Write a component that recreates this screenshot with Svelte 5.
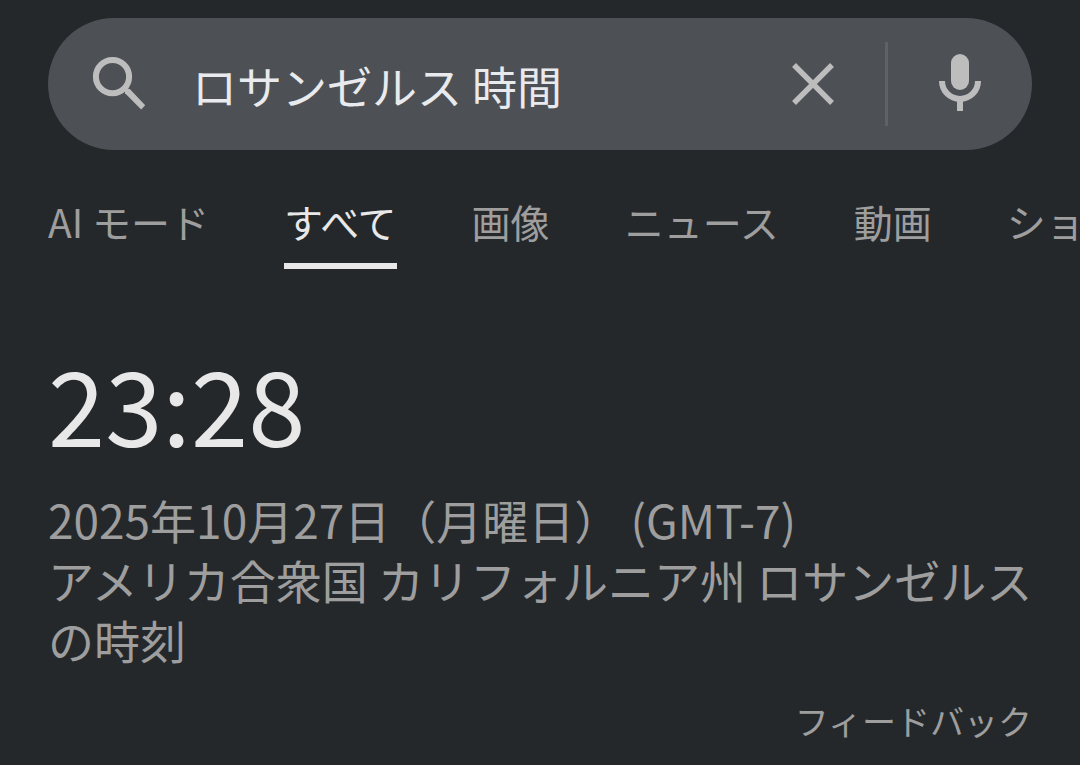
<script>
  let query = $state('ロサンゼルス 時間');
  let active = $state('すべて');

  const tabs = ['AI モード', 'すべて', '画像', 'ニュース', '動画', 'ショッピング'];
</script>

<div class="page">
  <form class="search" role="search" onsubmit={(e) => e.preventDefault()}>
    <button class="icon" aria-label="検索">
      <svg width="54" height="54" viewBox="0 0 54 54" fill="none" stroke="currentColor">
        <circle cx="20.5" cy="19.7" r="16.6" stroke-width="6" />
        <path d="M33 33.2 34.200 31.500 37.800 32 53.200 48.300 49.200 52.400 33 36.200Z" fill="currentColor" stroke="none" />
      </svg>
    </button>
    <input type="text" bind:value={query} aria-label="検索キーワード" />
    <button type="button" class="icon" aria-label="クリア" onclick={() => (query = '')}>
      <svg width="44" height="44" viewBox="0 0 44 44" fill="none" stroke="currentColor" stroke-width="5.4">
        <path d="M3 3 41 41M41 3 3 41" />
      </svg>
    </button>
    <span class="divider"></span>
    <button type="button" class="icon" aria-label="音声検索">
      <svg width="44" height="60" viewBox="0 0 44 60">
        <rect x="13" y="0" width="18" height="36" rx="9" fill="currentColor" />
        <path d="M4 27a18 18 0 0 0 36 0M22 45v12" fill="none" stroke="currentColor" stroke-width="6" />
      </svg>
    </button>
  </form>

  <nav class="tabs">
    {#each tabs as tab}
      <a href="#{tab}" class:active={tab === active} onclick={() => (active = tab)}>{tab}</a>
    {/each}
  </nav>

  <main class="result">
    <div class="time">23:28</div>
    <div class="details">
      <div>2025年10月27日（月曜日） (GMT-7)</div>
      <div>アメリカ合衆国 カリフォルニア州 ロサンゼルスの時刻</div>
    </div>
    <a class="feedback" href="#feedback">フィードバック</a>
  </main>
</div>

<style>
  :global(body) {
    background: #25282b;
  }

  .page {
    padding: 18px 48px 0;
    font-family: "Noto Sans CJK JP", sans-serif;
    color: #9e9e9e;
    overflow: hidden;
  }

  .search {
    display: flex;
    align-items: center;
    box-sizing: border-box;
    height: 132px;
    padding: 0 50px 0 44px;
    border-radius: 66px;
    background: #4d5055;
  }

  .icon {
    display: flex;
    flex-shrink: 0;
    padding: 0;
    border: 0;
    background: none;
    color: #bdbdbd;
    cursor: pointer;
  }

  input {
    flex: 1;
    min-width: 0;
    margin: 0 24px 0 46px;
    padding: 2px 0 0;
    border: 0;
    outline: 0;
    background: none;
    color: #e8eaed;
    font: 45px "Noto Sans CJK JP", sans-serif;
  }

  .divider {
    width: 3px;
    height: 84px;
    margin: 0 50px;
    background: #5f6368;
  }

  .tabs {
    display: flex;
    gap: 75px;
    margin: 41px -48px 0 0;
    overflow: hidden;
    font-size: 39px;
    line-height: 60px;
    white-space: nowrap;
  }

  .tabs a {
    flex-shrink: 0;
    padding-bottom: 12px;
    border-bottom: 6px solid transparent;
    color: inherit;
    text-decoration: none;
  }

  .tabs .active {
    color: #e8e8e8;
    border-color: #e8e8e8;
  }

  .result {
    display: flex;
    flex-direction: column;
    padding-top: 68px;
  }

  .time {
    color: #e8e8e8;
    font-size: 103px;
    line-height: 132px;
  }

  .details {
    margin: 20px -8px 0 0;
    font-size: 46px;
    line-height: 60px;
  }

  .feedback {
    align-self: flex-end;
    margin-top: 28px;
    font-size: 34px;
    line-height: 48px;
    color: inherit;
    text-decoration: none;
  }
</style>
